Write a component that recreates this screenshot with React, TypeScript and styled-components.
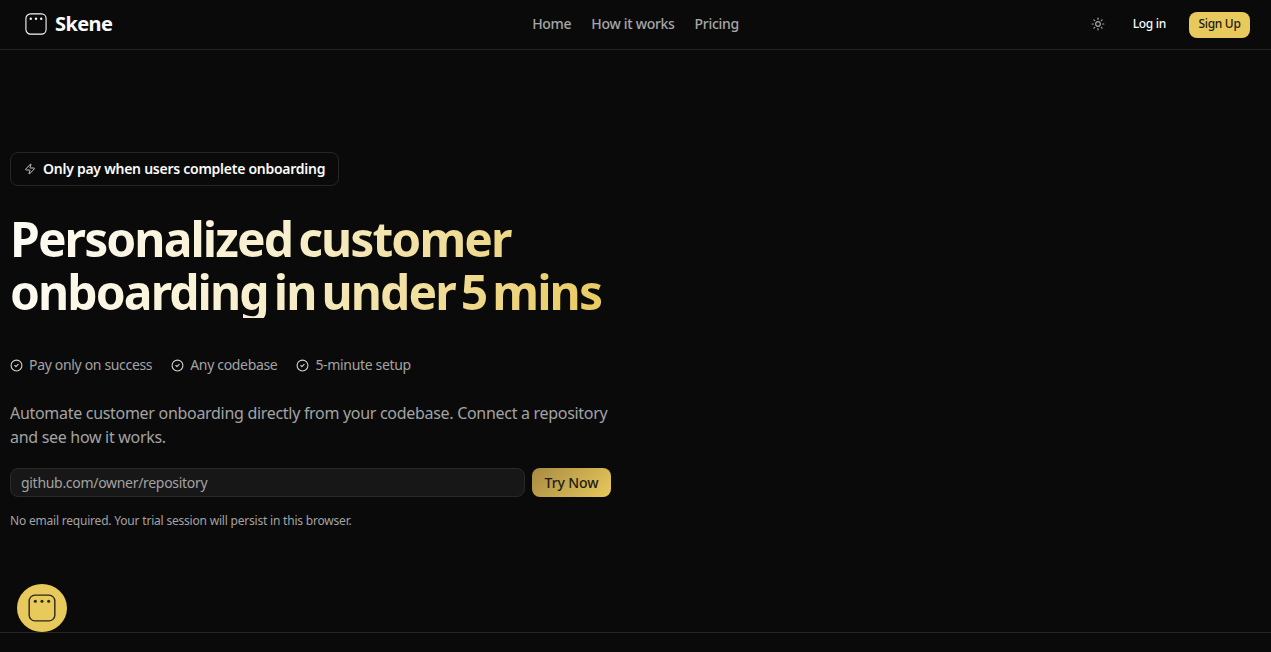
import React, { FC } from 'react';
import styled, { createGlobalStyle } from 'styled-components';
import { CircleCheck, Sun, Zap } from 'lucide-react';

const GlobalStyle = createGlobalStyle`
  html, body {
    margin: 0;
    padding: 0;
    background: #0a0a0a;
    font-family: "Noto Sans", "Open Sans", sans-serif;
  }
  * {
    box-sizing: border-box;
  }
`;

const Page = styled.div`
  position: relative;
  display: flex;
  flex-direction: column;
  width: 100%;
  height: 652px;
  overflow: hidden;
  background: #0a0a0a;
`;

const Header = styled.header`
  display: grid;
  grid-template-columns: 1fr auto 1fr;
  align-items: center;
  height: 50px;
  padding: 0 21px 2px;
  border-bottom: 1px solid #222222;
`;

const Brand = styled.div`
  display: flex;
  align-items: center;
  gap: 8px;
  padding-left: 4px;
  color: #fafafa;
  font-size: 20px;
  font-weight: 700;
  letter-spacing: -0.6px;
`;

const Nav = styled.nav`
  display: flex;
  align-items: center;
  gap: 20px;
`;

const NavLink = styled.a`
  color: #a6a6a6;
  font-size: 14px;
  font-weight: 500;
  letter-spacing: -0.3px;
`;

const HeaderActions = styled.div`
  display: flex;
  align-items: center;
  justify-content: flex-end;
  color: #a6a6a6;
`;

const LoginLink = styled.a`
  margin: 0 23px 0 28px;
  color: #fafafa;
  font-size: 12px;
  font-weight: 500;
  letter-spacing: -0.3px;
`;

const SignUpButton = styled.button`
  width: 61px;
  height: 26px;
  margin-top: 2px;
  padding: 0 0 2px;
  border: none;
  border-radius: 8px;
  background: #e8c95c;
  color: #1c1a10;
  font-family: inherit;
  font-size: 12px;
  font-weight: 500;
  letter-spacing: -0.3px;
`;

const Hero = styled.main`
  flex: 1;
  display: flex;
  flex-direction: column;
  align-items: flex-start;
  padding: 102px 0 0 10px;
`;

const Badge = styled.div`
  display: flex;
  align-items: center;
  gap: 7px;
  height: 34px;
  padding: 0 13px 2px;
  border: 1px solid #262626;
  border-radius: 8px;
  color: #fafafa;
  font-size: 14px;
  font-weight: 600;
  letter-spacing: -0.26px;
  svg {
    margin-top: 2px;
    color: #c4c4c4;
  }
`;

const Title = styled.h1`
  width: 620px;
  margin: 26px 0 0;
  background: linear-gradient(110deg, #fdfcf6 0%, #f7eecb 45%, #e8c95c 97%);
  background-clip: text;
  -webkit-background-clip: text;
  color: transparent;
  font-size: 48px;
  font-weight: 700;
  letter-spacing: -1.93px;
  word-spacing: -4.5px;
  line-height: 53px;
`;

const Perks = styled.ul`
  display: flex;
  gap: 19px;
  margin: 37px 0 0;
  padding: 0;
  list-style: none;
`;

const Perk = styled.li`
  display: flex;
  align-items: center;
  gap: 6px;
  color: #a3a3a3;
  font-size: 14px;
  letter-spacing: -0.33px;
  line-height: 20px;
  svg {
    color: #d4d4d4;
  }
`;

const Lead = styled.p`
  width: 610px;
  margin: 26px 0 0;
  color: #a3a3a3;
  font-size: 16px;
  letter-spacing: -0.3px;
  line-height: 24px;
`;

const TrialForm = styled.form`
  display: flex;
  gap: 7px;
  width: 601px;
  margin-top: 19px;
`;

const RepoInput = styled.input`
  flex: 1;
  height: 29px;
  padding: 0 10px;
  border: 1px solid #2a2a2a;
  border-radius: 8px;
  outline: none;
  background: #171717;
  color: #fafafa;
  font-family: inherit;
  font-size: 14px;
  letter-spacing: -0.3px;
  &::placeholder {
    color: #a3a3a3;
    opacity: 1;
  }
`;

const TryButton = styled.button`
  width: 79px;
  height: 29px;
  border: none;
  border-radius: 8px;
  background: linear-gradient(135deg, #a88a43 0%, #e8c95c 100%);
  color: #1c1a10;
  font-family: inherit;
  font-size: 14px;
  font-weight: 500;
  letter-spacing: -0.1px;
`;

const Note = styled.p`
  margin: 16px 0 0;
  color: #a3a3a3;
  font-size: 12px;
  letter-spacing: -0.2px;
  line-height: 16px;
`;

const Footer = styled.footer`
  height: 20px;
  border-top: 1px solid #262626;
`;

const ChatButton = styled.button`
  position: absolute;
  left: 17px;
  top: 584px;
  display: flex;
  align-items: center;
  justify-content: center;
  width: 50px;
  height: 48px;
  padding: 0;
  border: none;
  border-radius: 50%;
  background: #e8c95c;
  color: #2a2614;
`;

const LogoMark: FC<{ size: number }> = ({ size }) => (
  <svg width={size} height={size} viewBox="0 0 24 24" fill="none">
    <rect x="1" y="1" width="22" height="22" rx="5" stroke="currentColor" strokeWidth="1.2" />
    <circle cx="6.3" cy="6.2" r="1.3" fill="currentColor" />
    <circle cx="12" cy="6.2" r="1.3" fill="currentColor" />
    <circle cx="17.7" cy="6.2" r="1.3" fill="currentColor" />
  </svg>
);

const perks = ['Pay only on success', 'Any codebase', '5-minute setup'];

const App: FC = () => (
  <Page>
    <GlobalStyle />
    <Header>
      <Brand>
        <LogoMark size={22} />
        Skene
      </Brand>
      <Nav>
        <NavLink>Home</NavLink>
        <NavLink>How it works</NavLink>
        <NavLink>Pricing</NavLink>
      </Nav>
      <HeaderActions>
        <Sun size={14} />
        <LoginLink>Log in</LoginLink>
        <SignUpButton>Sign Up</SignUpButton>
      </HeaderActions>
    </Header>
    <Hero>
      <Badge>
        <Zap size={12} />
        Only pay when users complete onboarding
      </Badge>
      <Title>Personalized customer onboarding in under 5 mins</Title>
      <Perks>
        {perks.map((perk) => (
          <Perk key={perk}>
            <CircleCheck size={13} />
            {perk}
          </Perk>
        ))}
      </Perks>
      <Lead>Automate customer onboarding directly from your codebase. Connect a repository and see how it works.</Lead>
      <TrialForm>
        <RepoInput placeholder="github.com/owner/repository" />
        <TryButton type="button">Try Now</TryButton>
      </TrialForm>
      <Note>No email required. Your trial session will persist in this browser.</Note>
    </Hero>
    <Footer />
    <ChatButton>
      <LogoMark size={28} />
    </ChatButton>
  </Page>
);

export default App;
